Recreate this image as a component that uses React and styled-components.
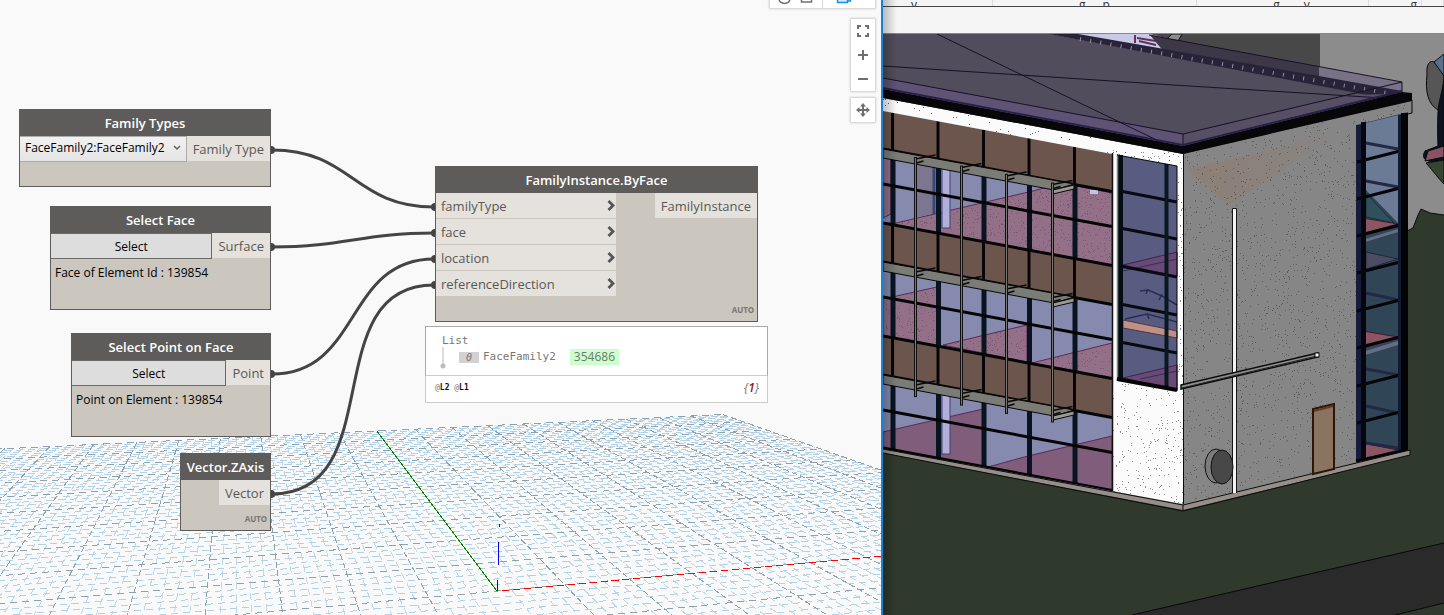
import React from "react";
import styled, { createGlobalStyle } from "styled-components";

const GlobalStyle = createGlobalStyle`
  * { box-sizing: border-box; }
  body { margin: 0; background: #f9f9f9; font-family: "Open Sans", "Noto Sans", sans-serif; }
  button, select { font-family: inherit; }
`;

const Desktop = styled.div`
  display: grid;
  grid-template-columns: minmax(0, 883fr) minmax(0, 561fr);
  height: 100vh;
  min-height: 540px;
  overflow: hidden;
`;

/* ---------- Graph workspace ---------- */

const Workspace = styled.main`
  position: relative;
  overflow: hidden;
  background: #f9f9f9;
  border-right: 2px solid #1883d7;
`;

const CanvasLayer = styled.svg`
  position: absolute;
  inset: 0;
  width: 100%;
  height: 100%;
  pointer-events: none;
`;

const NodeCard = styled.section`
  position: absolute;
  left: ${(p) => p.$x}px;
  top: ${(p) => p.$y}px;
  width: ${(p) => p.$w}px;
  height: ${(p) => p.$h}px;
  display: flex;
  flex-direction: column;
  background: #cbc6be;
  border: 1px solid #5e5c5a;
`;

const NodeTitle = styled.h2`
  margin: 0;
  height: 26px;
  flex: none;
  background: #5e5c5a;
  color: #fff;
  font-size: 13px;
  line-height: 27px;
  font-weight: 600;
  text-align: center;
  white-space: nowrap;
`;

const NodeRow = styled.div`
  display: flex;
  justify-content: space-between;
  align-items: flex-start;
`;

const Inputs = styled.div`
  display: grid;
  gap: 1px;
  width: 180px;
`;

const Port = styled.div`
  display: flex;
  align-items: center;
  justify-content: space-between;
  height: 25px;
  margin-left: ${(p) => (p.$out ? "auto" : "0")};
  padding: 2px ${(p) => (p.$out ? 6 : 0)}px 0 ${(p) => (p.$out ? 6 : 5)}px;
  background: #e5e2de;
  color: #5a5855;
  font-size: 13px;
  line-height: 23px;
  white-space: nowrap;
`;

const SelectButton = styled.button`
  flex: 1;
  height: 26px;
  padding: 0;
  border: solid #6b6a68;
  border-width: 1px 1px 1px 0;
  background: #dddddd;
  color: #000;
  font-size: 12px;
`;

const Picker = styled.label`
  position: relative;
  display: flex;
  flex: 1;
  height: 26px;
  border: 1px solid #acacac;
  border-left: 0;
  background: linear-gradient(#f2f2f2, #e4e4e4);
`;

const PickerSelect = styled.select`
  appearance: none;
  width: 100%;
  border: 0;
  padding: 0 0 3px 5px;
  background: transparent;
  color: #000;
  font-size: 12px;
`;

const PickerArrow = styled.svg`
  position: absolute;
  right: 5px;
  top: 8px;
`;

const NodeNote = styled.p`
  margin: 0;
  padding: 4px 4px;
  color: #000;
  font-size: 12px;
  line-height: 20px;
  white-space: nowrap;
`;

const Lacing = styled.span`
  margin: auto 3px 4px auto;
  color: #7b7772;
  font-family: "Noto Sans", "Open Sans", sans-serif;
  font-size: 8px;
  line-height: 14px;
  font-weight: 700;
`;

const Preview = styled.section`
  position: absolute;
  left: 425px;
  top: 326px;
  width: 343px;
  height: 77px;
  display: flex;
  flex-direction: column;
  background: #fff;
  color: #777;
  font-family: "DejaVu Sans Mono", monospace;
  font-size: 11px;
`;

const PreviewTree = styled.div`
  height: 50px;
  padding: 7px 16px;
  border: 1px solid #aaa;
  border-bottom-color: #ccc;
  line-height: 14px;
`;

const PreviewItem = styled.div`
  display: flex;
  align-items: center;
  height: 18px;
`;

const ItemIndex = styled.span`
  width: 20px;
  height: 11px;
  margin: 0 4px 0 14px;
  background: #d2d2d2;
  font-size: 10px;
  line-height: 11px;
  font-style: italic;
  text-align: center;
`;

const ItemId = styled.button`
  height: 16px;
  margin-left: 14px;
  padding: 0 4px;
  border: 0;
  background: #ccffcc;
  color: #6b7a6b;
  font-family: "Open Sans", sans-serif;
  font-size: 12px;
  line-height: 16px;
`;

const PreviewFooter = styled.footer`
  display: flex;
  flex: 1;
  align-items: center;
  justify-content: space-between;
  padding: 0 8px 3px 9px;
  border: 1px solid #ccc;
  border-top: 0;
`;

const Levels = styled.span`
  font-size: 8px;
  b { color: #111; font-weight: 700; }
`;

const Count = styled.em`
  font-family: "Open Sans", sans-serif;
  font-size: 12px;
  b { color: #8c1515; font-weight: 600; }
`;

const CanvasTools = styled.div`
  position: absolute;
  top: 0;
  right: 6px;
  display: flex;
  flex-direction: column;
  align-items: flex-end;
`;

const ToolGroup = styled.div`
  display: flex;
  flex-direction: ${(p) => (p.$row ? "row" : "column")};
  margin-bottom: ${(p) => (p.$row ? 11 : 7)}px;
  background: #fff;
  box-shadow: 0 0 2px 1px rgba(0, 0, 0, 0.18);
`;

const ToolButton = styled.button`
  display: grid;
  place-items: center;
  width: ${(p) => p.$w || 24}px;
  height: ${(p) => p.$h || 24}px;
  padding: 0;
  border: 0;
  border-left: ${(p) => (p.$divided ? "1px solid #d5d5d5" : "0")};
  background: transparent;
  color: #6f6f6f;
`;

/* ---------- Model viewer ---------- */

const Viewer = styled.aside`
  position: relative;
  display: flex;
  flex-direction: column;
  min-width: 0;
  background: #f5f5f5;
  &::after {
    content: "";
    position: absolute;
    inset: 0 auto 0 0;
    width: 14px;
    background: linear-gradient(90deg, rgba(0, 0, 0, 0.24), transparent);
  }
`;

const Ribbon = styled.div`
  display: grid;
  grid-template-columns: 110fr 204fr 172fr 53fr 22fr;
  flex: none;
  height: 7px;
  border-bottom: 1px solid #444;
  overflow: hidden;
`;

const RibbonPanel = styled.div`
  display: flex;
  justify-content: ${(p) => p.$align || "center"};
  align-items: flex-end;
  gap: ${(p) => p.$gap || 0}px;
  padding: 0 ${(p) => p.$right || 0}px 2px ${(p) => p.$left || 0}px;
  border-right: 1px solid #dcdcdc;
  color: #333;
  font-size: 12px;
  line-height: 10px;
`;

const OptionsBar = styled.div`
  flex: none;
  height: 27px;
  border-bottom: 1px solid #888;
`;

const Scene = styled.svg`
  display: block;
  flex: 1;
  width: 100%;
  min-height: 0;
`;

/* ---------- Background grid ---------- */

const ORIGIN = [498, 591];
const VP_DEPTH = [237, 244];
const VP_CROSS = [4300, 244];

// Screen position of a ground-plane point given in major grid steps.
function project(depth, cross) {
  const t = depth * 0.0856;
  const s = cross * 0.0179;
  const w = 1 + t + s;
  return [
    (ORIGIN[0] + t * VP_DEPTH[0] + s * VP_CROSS[0]) / w,
    (ORIGIN[1] + t * VP_DEPTH[1] + s * VP_CROSS[1]) / w,
  ];
}

const segment = (a, b) =>
  `M${a[0].toFixed(1)} ${a[1].toFixed(1)}L${b[0].toFixed(1)} ${b[1].toFixed(1)}`;

const grid = { depthMinor: "", depthMajor: "", crossMinor: "", crossMajor: "" };
for (let i = -50; i <= 50; i += 1) {
  const key = i % 5 === 0 ? "Major" : "Minor";
  if (i !== 0) grid["depth" + key] += segment(project(10, i / 5), project(-4, i / 5));
  if (i >= -16) grid["cross" + key] += segment(project(i / 5, -10), project(i / 5, 10));
}

function GroundGrid() {
  return (
    <CanvasLayer aria-hidden="true">
      <g fill="none" shapeRendering="crispEdges">
        <path d={grid.depthMinor} stroke="#bfd9e8" strokeDasharray="7 5" />
        <path d={grid.crossMinor} stroke="#b0d1e6" strokeDasharray="7 5" />
        <path d={grid.depthMajor} stroke="#8ba3b1" strokeDasharray="6 3" />
        <path d={grid.crossMajor} stroke="#8ba3b1" strokeDasharray="7 5" />
        <path d="M497 591L377 431" stroke="#008000" />
        <path d="M502 591L883 556" stroke="#f00" strokeDasharray="7 4" />
        <path d="M499.500 524v3M498.500 542v23M497.500 580v11" stroke="#00f" />
      </g>
    </CanvasLayer>
  );
}

const WIRES = [
  [150, 207, 80],
  [247, 233, 73],
  [374, 259, 89],
  [494, 285, 119],
];

function Wires() {
  return (
    <CanvasLayer aria-hidden="true">
      {WIRES.map(([from, to, pull]) => (
        <g key={from} fill="#454444">
          <path
            d={`M272 ${from}C${272 + pull} ${from} ${434 - pull} ${to} 434 ${to}`}
            fill="none"
            stroke="#454444"
            strokeWidth="3"
          />
          <path d={`M271 ${from - 4}a4 4 0 0 1 0 8z`} />
          <path d={`M435 ${to - 4}a4 4 0 0 0 0 8z`} />
        </g>
      ))}
    </CanvasLayer>
  );
}

function Chevron() {
  return (
    <svg width="9" height="13" viewBox="0 0 9 13" aria-hidden="true">
      <path d="M1.500 1l4.500 4.500L1.500 10" fill="none" stroke="#555" strokeWidth="2.800" />
    </svg>
  );
}

function SelectionNode({ x, y, w, title, output, note }) {
  return (
    <NodeCard $x={x} $y={y} $w={w} $h={104}>
      <NodeTitle>{title}</NodeTitle>
      <NodeRow>
        <SelectButton>Select</SelectButton>
        <Port $out>{output}</Port>
      </NodeRow>
      <NodeNote>{note}</NodeNote>
    </NodeCard>
  );
}

/* ---------- Building drawing ---------- */

function speckle(seed, count, x0, y0, x1, y1) {
  let n = seed;
  const next = () => {
    n = (n * 16807) % 2147483647;
    return n / 2147483647;
  };
  let d = "";
  for (let i = 0; i < count; i += 1) {
    d += `M${Math.round(x0 + next() * (x1 - x0))} ${Math.round(y0 + next() * (y1 - y0))}h1v1h-1z`;
  }
  return d;
}

const SPECKS = {
  fascia: speckle(11, 210, 883, 98, 1183, 168),
  white: speckle(27, 760, 1112, 150, 1183, 506),
  gray: speckle(91, 2400, 1184, 105, 1412, 506),
  pink: speckle(53, 2600, 883, 180, 1112, 380),
};

const SLOPE = 42.5 / 229;
const wallY = (y, x) => y + (x - 883) * SLOPE;
const MULLIONS = [892.5, 938, 983.5, 1029, 1074.5];
const POSTS = [915.5, 961.5, 1006.5, 1052.5];
const FLOORS = [149, 262, 375];

function band(top, bottom) {
  return `883,${top} 1112,${wallY(top, 1112)} 1112,${wallY(bottom, 1112)} 883,${bottom}`;
}

function Facade() {
  return (
    <g>
      <polygon points={band(111, 448)} fill="#858aae" />
      <g fill="#936f88" stroke="#5a2a58">
        <polygon points="883,150 891,151 891,214 883,218" />
        <polygon points="896,223 1033,191 1062,183 1112,193 1112,265 883,223" />
        <polygon points="883,299 937,287 937,346 883,336" />
        <polygon points="943,345 1027,325 1027,362" />
        <polygon points="1032,363 1112,343 1112,378" />
      </g>
      <path d={SPECKS.pink} fill="#5f4260" opacity="0.5" clipPath="url(#pinkClip)" />
      <g fill="#7f5d7b" stroke="#5a2a58">
        <polygon points="883,432 983,409 983,466 883,448" />
        <polygon points="988,467 1028,456 1112,436 1112,490" />
      </g>
      <polygon points="915,161 934,165 934,213 915,218" fill="#7c7690" />
      <path d="M934 164V214" stroke="#3a4478" strokeWidth="3" />
      <path d="M1090 190h8v4h-8z" fill="#c4c4e4" />
      <g fill="#b2b0d8" stroke="#40407a">
        <rect x="942" y="166" width="8" height="62" />
        <rect x="942" y="393" width="8" height="61" />
      </g>
      {[111, 223, 336].map((y) => (
        <polygon key={y} points={band(y, y + 39)} fill="#6b554d" />
      ))}
      {MULLIONS.map((x) => (
        <g key={x}>
          <path d={`M${x} ${wallY(111, x)}V${wallY(448, x)}`} stroke="#060606" strokeWidth="3" />
          {FLOORS.map((y) => (
            <path
              key={y}
              d={`M${x + 0.5} ${wallY(y, x)}V${wallY(y + 74, x)}`}
              stroke="#081420"
              strokeWidth="5"
            />
          ))}
        </g>
      ))}
      <path
        d={[149, 184, 223, 262, 297, 336, 375, 410, 448]
          .map((y) => `M883 ${y}L1112 ${wallY(y, 1112)}`)
          .join("")}
        stroke="#050505"
        strokeWidth="3"
      />
      {FLOORS.map((y) => (
        <g key={y} strokeLinejoin="round">
          <polygon
            points={`883,${y} 1074,${y + 35} 1054,${y + 41} 883,${y + 9}`}
            fill="#7b7c76"
            stroke="#080808"
          />
          {POSTS.map((x) => (
            <path
              key={x}
              d={`M${x} ${wallY(y + 4, x)}l20 -4M${x + 1} ${wallY(y + 8, x)}l7 -2`}
              stroke="#0a0a0a"
              strokeWidth="1.500"
            />
          ))}
          <polygon
            points={`1053,${y + 41} 1074,${y + 36} 1074,${y + 40} 1053,${y + 45}`}
            fill="#999a94"
            stroke="#080808"
          />
        </g>
      ))}
      {POSTS.map((x) => (
        <g key={x}>
          <path d={`M${x} ${wallY(151, x)}V${wallY(391, x)}`} stroke="#111" strokeWidth="3" />
          <path d={`M${x} ${wallY(152, x)}V${wallY(390, x)}`} stroke="#777872" />
        </g>
      ))}
    </g>
  );
}

function CornerWindow() {
  return (
    <g>
      <path d="M1112.500 153V491" stroke="#111" strokeWidth="1.500" />
      <polygon points="1117,155 1177,166 1177,391 1117,380" fill="#585c80" />
      <g fill="#694a74" stroke="#451f50">
        <polygon points="1123,265 1177,252 1177,276" />
        <polygon points="1123,378 1177,365 1177,390" />
      </g>
      <path d="M1123 271L1177 259M1140 379L1177 371" stroke="#31305c" />
      <path d="M1140 291l8 -1 14 6 15 9M1148 289l-2 5M1162 294l-3 6M1125 319l22 -5 30 8M1147 314l2 5" fill="none" stroke="#2b2d54" strokeWidth="1.500" />
      <polygon points="1123,320 1177,331 1177,338 1123,328" fill="#be9184" stroke="#53344c" />
      <path
        d={[192, 229, 267, 305, 343].map((y) => `M1120 ${y - 1}L1177 ${y + 10}`).join("")}
        stroke="#070a10"
        strokeWidth="3"
      />
      <path d="M1166.500 164V389" stroke="#0a1622" strokeWidth="4" />
      <path d="M1120.500 155V380" stroke="#060c14" strokeWidth="5" />
      <path d="M1117.500 154V380" stroke="#83837e" strokeWidth="1.500" />
      <path d="M1117 379L1177 390" stroke="#050505" strokeWidth="4" />
      <path d="M1117 155L1177 166V391" fill="none" stroke="#050505" />
    </g>
  );
}

const SIDE_ROWS = [151, 188, 225, 262, 300, 337, 375, 412];

function SideWindows() {
  return (
    <g>
      <polygon points="1356,125 1408,112 1408,452 1356,463" fill="#304656" />
      <polygon points="1366,123 1399,115 1399,224 1366,190" fill="#6b7a95" />
      <polygon points="1366,193 1394,223 1366,217" fill="#30505c" stroke="#163040" />
      <g fill="#8a5663" stroke="#3e1c33">
        <polygon points="1357,217 1398,224 1357,235" />
        <polygon points="1357,330 1398,337 1357,350" />
        <polygon points="1357,442 1398,450 1357,461" />
      </g>
      <polygon points="1366,252 1398,259 1366,269" fill="#4c4b63" stroke="#20283c" />
      <g fill="#666d85">
        <polygon points="1362,240 1398,229 1398,232 1362,243" />
        <polygon points="1362,352 1398,341 1398,345 1362,356" />
      </g>
      <path
        d="M1366 143l32 6M1366 181l32 6M1366 293l32 7M1366 369l32 6M1366 406l32 7M1366 443l32 5"
        stroke="#232846"
        strokeWidth="3"
      />
      <path d="M1358.500 125V461" stroke="#171c3a" strokeWidth="5" />
      <path
        d={SIDE_ROWS.map((y) => `M1357 ${y + 11}L1400 ${y}`).join("")}
        stroke="#050508"
        strokeWidth="3"
      />
      <path d="M1363.500 122V461" stroke="#05070d" strokeWidth="5" />
      <path d="M1399.500 115V453" stroke="#101b33" strokeWidth="3" />
      <path d="M1404.500 113V452" stroke="#040406" strokeWidth="7" />
      <path d="M1356 461L1408 450" stroke="#050508" strokeWidth="3" />
    </g>
  );
}

function Roof() {
  return (
    <g>
      <polygon points="1048,34 1150,34 1174,40 1174,58 1150,54" fill="#c9c9e8" />
      <path d="M1135 35v8M1137 38l19 3M1139 41l17 4M1163 34l-4 8 14 4" stroke="#603458" strokeWidth="2" fill="none" />
      <path d="M1172 34l-10 10 12 4 8 -14z" fill="#8c8c8c" stroke="#111" />
      <polygon points="883,34 1050,34 1383,97 1183,146 883,90" fill="#524d5c" />
      <polygon points="1150,35 1319,67 1319,82 1165,53" fill="#3c3848" />
      <polygon points="1319,67 1402,82 1402,93 1319,80" fill="#777286" />
      <polygon points="1049,34 1078,34 1319,76 1402,91 1398,94 1383,98" fill="#29233a" />
      <path d="M1080 39L1398 95" stroke="#cfcbe0" strokeWidth="4" strokeDasharray="1 9.300" opacity="0.65" />
      <polygon points="883,78 1183,134 1183,147 883,90" fill="#5e5375" />
      <polygon points="1183,134 1345,95 1390,94 1183,146" fill="#575065" />
      <path
        d="M883 78L1183 134L1402 82L1149 35M1402 82V93M1183 134V146M937 34L1165 144M883 66L1173 85L1383 98"
        fill="none"
        stroke="#181028"
      />
      <polygon points="883,89 1183,146 1402,92 1412,93 1412,101 1183,154 883,98" fill="#070608" />
      <path d="M883 88L1183 145L1402 91" fill="none" stroke="#2a2148" strokeWidth="2" />
    </g>
  );
}

function Building() {
  return (
    <Scene viewBox="883 34 561 581" preserveAspectRatio="xMinYMin slice" role="img" aria-label="3D model">
      <defs>
        <clipPath id="grayClip">
          <polygon points="1183,154 1412,100 1412,113 1356,126 1356,463 1183,506" />
        </clipPath>
        <clipPath id="whiteClip">
          <path d="M1112 141L1183 154V506L1112 491V381L1178 392V166L1112 154z" />
        </clipPath>
        <clipPath id="fasciaClip">
          <polygon points="883,98 1183,154 1183,167 883,111" />
        </clipPath>
        <clipPath id="pinkClip">
          <path d="M896 223L1062 183 1112 193V265zM883 299l54 -12v59l-54 -10zM943 345l84 -20v37zM1032 363l80 -20v35z" />
        </clipPath>
        <linearGradient id="tint" x1="0" x2="1">
          <stop offset="0" stopColor="#a06d49" stopOpacity="0.28" />
          <stop offset="1" stopColor="#a06d49" stopOpacity="0.04" />
        </linearGradient>
      </defs>

      <rect x="883" y="34" width="561" height="581" fill="#303a2c" />
      <path d="M1300 34H1444V215L1430 213L1421 209L1418 215L1413 228L1407 231H1300z" fill="#8c8c8c" />
      <path d="M1407 231L1413 228L1418 215L1421 209L1430 213L1444 215" fill="none" stroke="#0c0c0c" />
      <rect x="1150" y="34" width="170" height="60" fill="#484848" />
      <g stroke="#0a0a0a">
        <path d="M1444 54L1434 62L1444 110z" fill="#58708e" />
        <path d="M1444 75C1438 90 1437 120 1438 146L1425 151C1420 160 1428 164 1444 160z" fill="#0d1220" />
        <path d="M1428 151L1444 146V157L1425 161z" fill="#875365" />
        <path d="M1426 163L1444 160V184C1438 178 1434 172 1426 163z" fill="#35452f" />
        <path d="M1434 62C1430 60 1426 64 1427 74C1425 92 1428 104 1438 110C1440 96 1443 90 1444 76z" fill="#565656" />
      </g>
      <polygon points="1132,615 1444,543 1444,603 1395,615" fill="#2b2a2b" />
      <path d="M1132 615L1444 543M1395 615L1444 603" stroke="#080808" />

      <Facade />
      <polygon points="883,98 1183,154 1183,506 1112,491 1112,154 883,111" fill="#fbfbfb" />
      <g fill="#222">
        <path d={SPECKS.fascia} clipPath="url(#fasciaClip)" opacity="0.7" />
        <path d={SPECKS.white} clipPath="url(#whiteClip)" opacity="0.5" />
      </g>
      <CornerWindow />

      <polygon points="1183,154 1412,100 1412,113 1356,126 1356,463 1183,506" fill="#868686" />
      <polygon points="1188,169 1335,134 1228,206" fill="url(#tint)" />
      <path d={SPECKS.gray} fill="#333" opacity="0.5" clipPath="url(#grayClip)" />
      <path d="M1356 126L1412 113V100M1183.500 154V506" fill="none" stroke="#0a0a0a" />
      <SideWindows />
      <Roof />

      <polygon points="883,449 1183,504 1410,450 1410,455 1183,510 883,453" fill="#968e8a" />
      <path d="M883 449L1183 505L1410 450V455L1183 511L883 453M1183 505v6" fill="none" stroke="#0c0c0c" />
      <path d="M1313 474V409L1334 404V469z" fill="#8a7360" stroke="#2a1508" strokeWidth="2" />
      <path d="M1314 411L1333 406" stroke="#69391c" strokeWidth="2" />
      <path d="M1232.500 493V208.500h4V493" fill="#f4f4f4" stroke="#151515" />
      <polygon points="1181,385 1318,353 1318,357 1181,389" fill="#8e8e8c" stroke="#0c0c0c" strokeWidth="1.500" />
      <path d="M1182 388L1317 356" stroke="#222" />
      <rect x="1315" y="353" width="4" height="4" fill="#fff" stroke="#0c0c0c" />
      <ellipse cx="1216" cy="466" rx="11" ry="17" fill="#7c7c7c" stroke="#111" />
      <ellipse cx="1222" cy="467" rx="11" ry="17" fill="#484848" stroke="#111" />
    </Scene>
  );
}

function Tools() {
  return (
    <CanvasTools>
      <ToolGroup $row>
        <ToolButton $w={52} $h={8} aria-label="Geometry view">
          <svg width="52" height="8" fill="none" stroke="#707070" strokeWidth="1.500">
            <path d="M9 -1a5 4 0 0 0 11 0M31.500 -1v3h10v-3" />
          </svg>
        </ToolButton>
        <ToolButton $w={53} $h={8} $divided aria-label="Graph view">
          <svg width="52" height="8" stroke="#1b8fe6" strokeWidth="1.500">
            <path d="M14.500 -2v4.500h10v-4.500M24.500 1h3v-3" fill="#cfe8fb" />
          </svg>
        </ToolButton>
      </ToolGroup>
      <ToolGroup>
        <ToolButton aria-label="Fit to screen">
          <svg width="12" height="12" fill="none" stroke="currentColor" strokeWidth="2">
            <path d="M1 4V1H4M8 1H11V4M11 8V11H8M4 11H1V8" />
          </svg>
        </ToolButton>
        <ToolButton aria-label="Zoom in">
          <svg width="12" height="12" stroke="currentColor" strokeWidth="2">
            <path d="M6 1V11M1 6H11" />
          </svg>
        </ToolButton>
        <ToolButton aria-label="Zoom out">
          <svg width="12" height="12" stroke="currentColor" strokeWidth="2">
            <path d="M1 6H11" />
          </svg>
        </ToolButton>
      </ToolGroup>
      <ToolGroup>
        <ToolButton aria-label="Pan">
          <svg width="14" height="14" fill="currentColor">
            <path d="M7 0L10 3.500H8V6H10.500V4L14 7L10.500 10V8H8V10.500H10L7 14L4 10.500H6V8H3.500V10L0 7L3.500 4V6H6V3.500H4z" />
          </svg>
        </ToolButton>
      </ToolGroup>
    </CanvasTools>
  );
}

export default function App() {
  return (
    <Desktop>
      <GlobalStyle />
      <Workspace>
        <GroundGrid />

        <NodeCard $x={19} $y={109} $w={252} $h={78}>
          <NodeTitle>Family Types</NodeTitle>
          <NodeRow>
            <Picker>
              <PickerSelect aria-label="Family Types" defaultValue="FaceFamily2:FaceFamily2">
                <option>FaceFamily2:FaceFamily2</option>
              </PickerSelect>
              <PickerArrow width="8" height="6" aria-hidden="true">
                <path d="M1 1l3 3 3 -3" fill="none" stroke="#606060" strokeWidth="1.500" />
              </PickerArrow>
            </Picker>
            <Port $out>Family Type</Port>
          </NodeRow>
        </NodeCard>

        <SelectionNode x={50} y={206} w={221} title="Select Face" output="Surface" note="Face of Element Id : 139854" />
        <SelectionNode x={71} y={333} w={200} title="Select Point on Face" output="Point" note="Point on Element : 139854" />

        <NodeCard $x={180} $y={453} $w={91} $h={78}>
          <NodeTitle>Vector.ZAxis</NodeTitle>
          <NodeRow>
            <Port $out>Vector</Port>
          </NodeRow>
          <Lacing>AUTO</Lacing>
        </NodeCard>

        <NodeCard $x={435} $y={166} $w={323} $h={156}>
          <NodeTitle>FamilyInstance.ByFace</NodeTitle>
          <NodeRow>
            <Inputs>
              {["familyType", "face", "location", "referenceDirection"].map((name) => (
                <Port key={name}>
                  {name}
                  <Chevron />
                </Port>
              ))}
            </Inputs>
            <Port $out>FamilyInstance</Port>
          </NodeRow>
          <Lacing>AUTO</Lacing>
        </NodeCard>

        <Preview>
          <PreviewTree>
            List
            <PreviewItem>
              <svg width="3" height="22" overflow="visible" aria-hidden="true">
                <path d="M1 1V18" stroke="#bbb" />
                <circle cx="1" cy="20" r="2.500" fill="#bbb" />
              </svg>
              <ItemIndex>0</ItemIndex>
              FaceFamily2
              <ItemId>354686</ItemId>
            </PreviewItem>
          </PreviewTree>
          <PreviewFooter>
            <Levels>@<b>L2</b> @<b>L1</b></Levels>
            <Count>{"{"}<b>1</b>{"}"}</Count>
          </PreviewFooter>
        </Preview>

        <Wires />
        <Tools />
      </Workspace>

      <Viewer>
        <Ribbon aria-hidden="true">
          <RibbonPanel $align="flex-start" $left={28}>y</RibbonPanel>
          <RibbonPanel $gap={17}><span>g</span><span>p</span></RibbonPanel>
          <RibbonPanel $gap={24} $left={18}><span>g</span><span>y</span></RibbonPanel>
          <RibbonPanel $align="flex-end" $right={4}>g</RibbonPanel>
          <RibbonPanel />
        </Ribbon>
        <OptionsBar />
        <Building />
      </Viewer>
    </Desktop>
  );
}
